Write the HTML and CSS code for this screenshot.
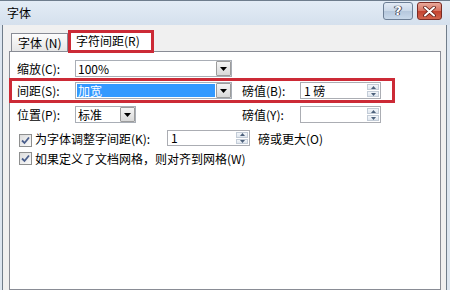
FILE: index.html
```html
<!DOCTYPE html>
<html lang="zh">
<head>
<meta charset="utf-8">
<link rel="stylesheet" href="styles.css">
</head>
<body>
<div class="win">
  <div class="titlebar">
    <span class="title">字体</span>
    <div class="caps">
      <div class="cap help"><span>?</span></div>
      <div class="cap close">
        <svg width="13" height="11" viewBox="0 0 13 11"><path d="M2 1.5 L11 9.5 M11 1.5 L2 9.5" stroke="#5a1a14" stroke-width="3.6" stroke-linecap="round"/><path d="M2 1.5 L11 9.5 M11 1.5 L2 9.5" stroke="#fff" stroke-width="2" stroke-linecap="round"/></svg>
      </div>
    </div>
  </div>
  <div class="client">
    <div class="tabs">
      <div class="tab">字体 (N)</div>
      <div class="tab active">字符间距(R)</div>
    </div>
    <div class="panel">
      <div class="row r1">
        <span class="lbl">缩放(C):</span>
        <div class="cell">
          <div class="combo wide"><span class="val">100%</span><span class="dd"><svg width="7" height="4" viewBox="0 0 7 4"><path d="M0 0H7L3.5 4Z" fill="#000"/></svg></span></div>
        </div>
      </div>
      <div class="row mark">
        <span class="lbl">间距(S):</span>
        <div class="cell">
          <div class="combo wide"><span class="val sel">加宽</span><span class="dd"><svg width="7" height="4" viewBox="0 0 7 4"><path d="M0 0H7L3.5 4Z" fill="#000"/></svg></span></div>
        </div>
        <span class="lbl">磅值(B):</span>
        <div class="spin"><span class="val">1 磅</span><span class="btns"><span class="sb"><svg width="5" height="3" viewBox="0 0 5 3"><path d="M0 3H5L2.5 0Z" fill="#4c607a"/></svg></span><span class="sb"><svg width="5" height="3" viewBox="0 0 5 3"><path d="M0 0H5L2.5 3Z" fill="#4c607a"/></svg></span></span></div>
      </div>
      <div class="row r3">
        <span class="lbl">位置(P):</span>
        <div class="cell">
          <div class="combo narrow"><span class="val">标准</span><span class="dd"><svg width="7" height="4" viewBox="0 0 7 4"><path d="M0 0H7L3.5 4Z" fill="#000"/></svg></span></div>
        </div>
        <span class="lbl">磅值(Y):</span>
        <div class="spin"><span class="val"></span><span class="btns"><span class="sb"><svg width="5" height="3" viewBox="0 0 5 3"><path d="M0 3H5L2.5 0Z" fill="#4c607a"/></svg></span><span class="sb"><svg width="5" height="3" viewBox="0 0 5 3"><path d="M0 0H5L2.5 3Z" fill="#4c607a"/></svg></span></span></div>
      </div>
      <div class="row r4">
        <span class="cb"><svg width="9" height="9" viewBox="0 0 9 9"><path d="M1 4.5 L3.5 7 L8 1.5" fill="none" stroke="#4a5e8c" stroke-width="1.8"/></svg></span>
        <span class="cbtext">为字体调整字间距(K):</span>
        <div class="spin kern"><span class="val">1</span><span class="btns"><span class="sb"><svg width="5" height="3" viewBox="0 0 5 3"><path d="M0 3H5L2.5 0Z" fill="#4c607a"/></svg></span><span class="sb"><svg width="5" height="3" viewBox="0 0 5 3"><path d="M0 0H5L2.5 3Z" fill="#4c607a"/></svg></span></span></div>
        <span class="after">磅或更大(O)</span>
      </div>
      <div class="row r5">
        <span class="cb"><svg width="9" height="9" viewBox="0 0 9 9"><path d="M1 4.5 L3.5 7 L8 1.5" fill="none" stroke="#4a5e8c" stroke-width="1.8"/></svg></span>
        <span class="cbtext2">如果定义了文档网格，则对齐到网格(W)</span>
      </div>
    </div>
  </div>
</div>
</body>
</html>
```
FILE: styles.css
```css
* { box-sizing: border-box; }
html, body { margin: 0; padding: 0; }
body {
  width: 450px;
  height: 290px;
  overflow: hidden;
  background: #e6ecf2;
  font-family: "Noto Sans CJK SC", "Noto Sans", sans-serif;
  font-size: 12px;
  color: #000;
}
.win {
  width: 450px;
  height: 290px;
  display: flex;
  flex-direction: column;
  background: #dde6f0;
  border-top: 1px solid #6e7d8d;
}
.titlebar {
  height: 24px;
  flex: none;
  display: flex;
  align-items: center;
  padding-left: 7px;
  background: linear-gradient(#e3ecf6, #d5e0ed);
}
.title { flex: 1; line-height: 14px; }
.caps {
  display: flex;
  gap: 4px;
  align-self: flex-start;
  margin-top: 1px;
  margin-right: 8px;
}
.cap {
  height: 18px;
  border: 1px solid #6d7f95;
  border-radius: 3px;
  display: flex;
  align-items: center;
  justify-content: center;
}
.help {
  width: 30px;
  background: linear-gradient(#e3ebf5 0%, #cad8e8 50%, #b5c7dc 51%, #c9d9ea 100%);
}
.help span {
  font-family: "DejaVu Sans", sans-serif;
  font-weight: bold;
  font-size: 13px;
  line-height: 14px;
  color: #fff;
  text-shadow: 0 0 1px #334, 0 0 1px #334, 1px 0 0 #556, -1px 0 0 #556;
}
.close {
  width: 25px;
  border-color: #7a2b24;
  background: linear-gradient(#e9a99b 0%, #d8715f 50%, #c3422f 51%, #d2654e 100%);
}
.client {
  flex: 1;
  margin: 0 3px 0 2px;
  border-left: 1px solid #707d8a;
  border-right: 1px solid #707d8a;
  background: #f0f0f0;
  padding: 0 5px 0 6px;
  display: flex;
  flex-direction: column;
}
.tabs {
  display: flex;
  align-items: flex-end;
  padding-left: 2px;
  margin-top: 5px;
}
.tab {
  width: 57px;
  height: 18px;
  border: 1px solid #898c95;
  border-bottom: none;
  background: linear-gradient(#fdfdfd, #e6e6e6);
  padding-left: 6px;
  line-height: 17px;
  white-space: nowrap;
}
.tab.active {
  width: 86px;
  height: 23px;
  margin-bottom: -2px;
  border: 3px solid #cc2a36;
  background: #fff;
  padding-left: 5px;
  line-height: 16px;
  position: relative;
  z-index: 1;
}
.panel {
  width: 432px;
  flex: 1;
  border: 1px solid #898c95;
  background: #fff;
  padding: 8px 0 0 7px;
}
.row {
  display: flex;
  align-items: center;
  height: 17px;
  white-space: nowrap;
}
.lbl { width: 58px; flex: none; }
.cell { width: 167px; flex: none; }
.combo {
  display: flex;
  height: 17px;
  border: 1px solid #a9aeb6;
  background: #fff;
}
.combo.wide { width: 157px; }
.combo.narrow { width: 61px; }
.combo .val {
  flex: 1;
  padding-left: 2px;
  line-height: 15px;
}
.combo .val.sel {
  margin: 1px 1px 1px 1px;
  padding-left: 1px;
  line-height: 13px;
  background: #3399ff;
  color: #fff;
}
.dd {
  width: 15px;
  flex: none;
  margin: 0 0 0 0;
  border: 1px solid #9c9c9c;
  border-radius: 1px;
  background: linear-gradient(#f5f5f5, #d9d9d9);
  display: flex;
  align-items: center;
  justify-content: center;
}
.spin {
  display: flex;
  width: 81px;
  height: 17px;
  border: 1px solid #abadb3;
  background: #fff;
}
.spin .val {
  flex: 1;
  padding-left: 3px;
  line-height: 15px;
}
.btns {
  width: 12px;
  flex: none;
  margin: 1px 1px 1px 0;
  display: flex;
  flex-direction: column;
  gap: 1px;
}
.sb {
  flex: 1;
  background: linear-gradient(#f3f6fa, #dfe6ee);
  border: 1px solid #c3ccd7;
  display: flex;
  align-items: center;
  justify-content: center;
}
.mark {
  height: 25px;
  width: 386px;
  margin: 1px 0 0 -8px;
  border: 3px solid #cc2a36;
  padding-left: 5px;
}
.r3 { margin-top: 3px; }
.r4 { margin-top: 7px; height: 16px; }
.r5 { margin-top: 4px; }
.cb {
  width: 13px;
  height: 13px;
  flex: none;
  margin: 0 3px 0 2px;
  border: 1px solid #8e8f8f;
  background: linear-gradient(135deg, #dcdcdc, #fbfbfb);
  display: flex;
  align-items: center;
  justify-content: center;
}
.r4 .cb { margin-top: 4px; }
.cbtext { width: 132px; flex: none; }
.spin.kern { width: 83px; height: 16px; }
.spin.kern .val { line-height: 14px; }
.after { margin-left: 8px; }
```
